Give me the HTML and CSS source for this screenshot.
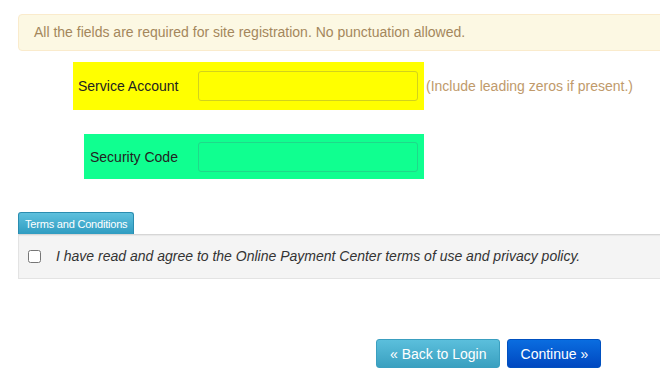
FILE: index.html
```html
<!DOCTYPE html>
<html lang="en">
<head>
    <meta charset="UTF-8">
    <meta name="viewport" content="width=device-width, initial-scale=1.0">
    <title>Site Registration</title>
    <link rel="stylesheet" href="styles.css">
</head>
<body>
    <div class="page">
        <div class="alert">All the fields are required for site registration. No punctuation allowed.</div>

        <div class="field-row">
            <div class="field field-account">
                <label for="account">Service Account</label>
                <input type="text" id="account">
            </div>
            <span class="hint">(Include leading zeros if present.)</span>
        </div>

        <div class="field-row">
            <div class="field field-code">
                <label for="code">Security Code</label>
                <input type="text" id="code">
            </div>
        </div>

        <div class="terms">
            <span class="terms-tab">Terms and Conditions</span>
            <div class="terms-panel">
                <input type="checkbox" id="agree">
                <label for="agree">I have read and agree to the Online Payment Center terms of use and privacy policy.</label>
            </div>
        </div>

        <div class="actions">
            <button class="btn btn-info">&laquo; Back to Login</button>
            <button class="btn btn-primary">Continue &raquo;</button>
        </div>
    </div>
</body>
</html>
```

FILE: styles.css
```css
body {
    margin: 0;
    font-family: "Liberation Sans", Arial, sans-serif;
    font-size: 14px;
    color: #333;
    overflow: hidden;
}
.page {
    width: 700px;
    padding: 14px 0 0 18px;
}
.alert {
    height: 35px;
    line-height: 35px;
    padding: 0 15px;
    background-color: #fcf8e3;
    border: 1px solid #faebcc;
    border-radius: 4px;
    color: #a4875c;
}
.field-row {
    display: flex;
    align-items: center;
}
.field {
    display: flex;
    align-items: center;
    box-sizing: border-box;
    flex-shrink: 0;
}
.field label {
    color: #222;
    white-space: nowrap;
}
.field input {
    box-sizing: border-box;
    width: 220px;
    height: 30px;
    margin-left: auto;
    border: 1px solid #d2d21c;
    border-radius: 3px;
    background: transparent;
}
.field-account {
    margin: 11px 0 0 55px;
    width: 351px;
    height: 48px;
    padding: 0 6px 0 5px;
    background-color: #ffff00;
}
.field-code {
    margin: 24px 0 0 66px;
    width: 340px;
    height: 45px;
    padding: 0 6px 0 6px;
    background-color: #10ff90;
}
.field-code input {
    border-color: #1fd98a;
}
.hint {
    margin: 11px 0 0 2px;
    color: #c09a6b;
    white-space: nowrap;
}
.terms {
    margin-top: 33px;
}
.terms-tab {
    display: inline-block;
    box-sizing: border-box;
    height: 22px;
    line-height: 22px;
    padding: 0 6px;
    font-size: 11px;
    letter-spacing: -0.2px;
    color: #fff;
    background: linear-gradient(#5ec0dd, #2f9cc1);
    border: 1px solid #2a8db0;
    border-bottom: none;
    border-radius: 3px 3px 0 0;
    vertical-align: bottom;
}
.terms-panel {
    display: flex;
    align-items: center;
    height: 42px;
    padding-bottom: 1px;
    background-color: #f4f4f4;
    border: 1px solid #e3e3e3;
    border-top-color: #d6d6d6;
    box-shadow: inset 0 1px 1px rgba(0, 0, 0, 0.05);
}
.terms-panel input {
    width: 13px;
    height: 13px;
    margin: 0 0 0 9px;
}
.terms-panel label {
    margin-left: 15px;
    font-style: italic;
    color: #333;
}
.actions {
    display: flex;
    gap: 7px;
    margin: 60px 0 0 358px;
}
.btn {
    height: 29px;
    padding: 0 12px 0 13px;
    font-family: "Liberation Sans", Arial, sans-serif;
    font-size: 14px;
    color: #fff;
    white-space: nowrap;
    border-radius: 3px;
    cursor: pointer;
}
.btn-info {
    background: linear-gradient(#5bbfdc, #3aa0c0);
    border: 1px solid #3a9fc0;
}
.btn-primary {
    background: linear-gradient(#0a6de0, #0048c0);
    border: 1px solid #0050c0;
}
```
